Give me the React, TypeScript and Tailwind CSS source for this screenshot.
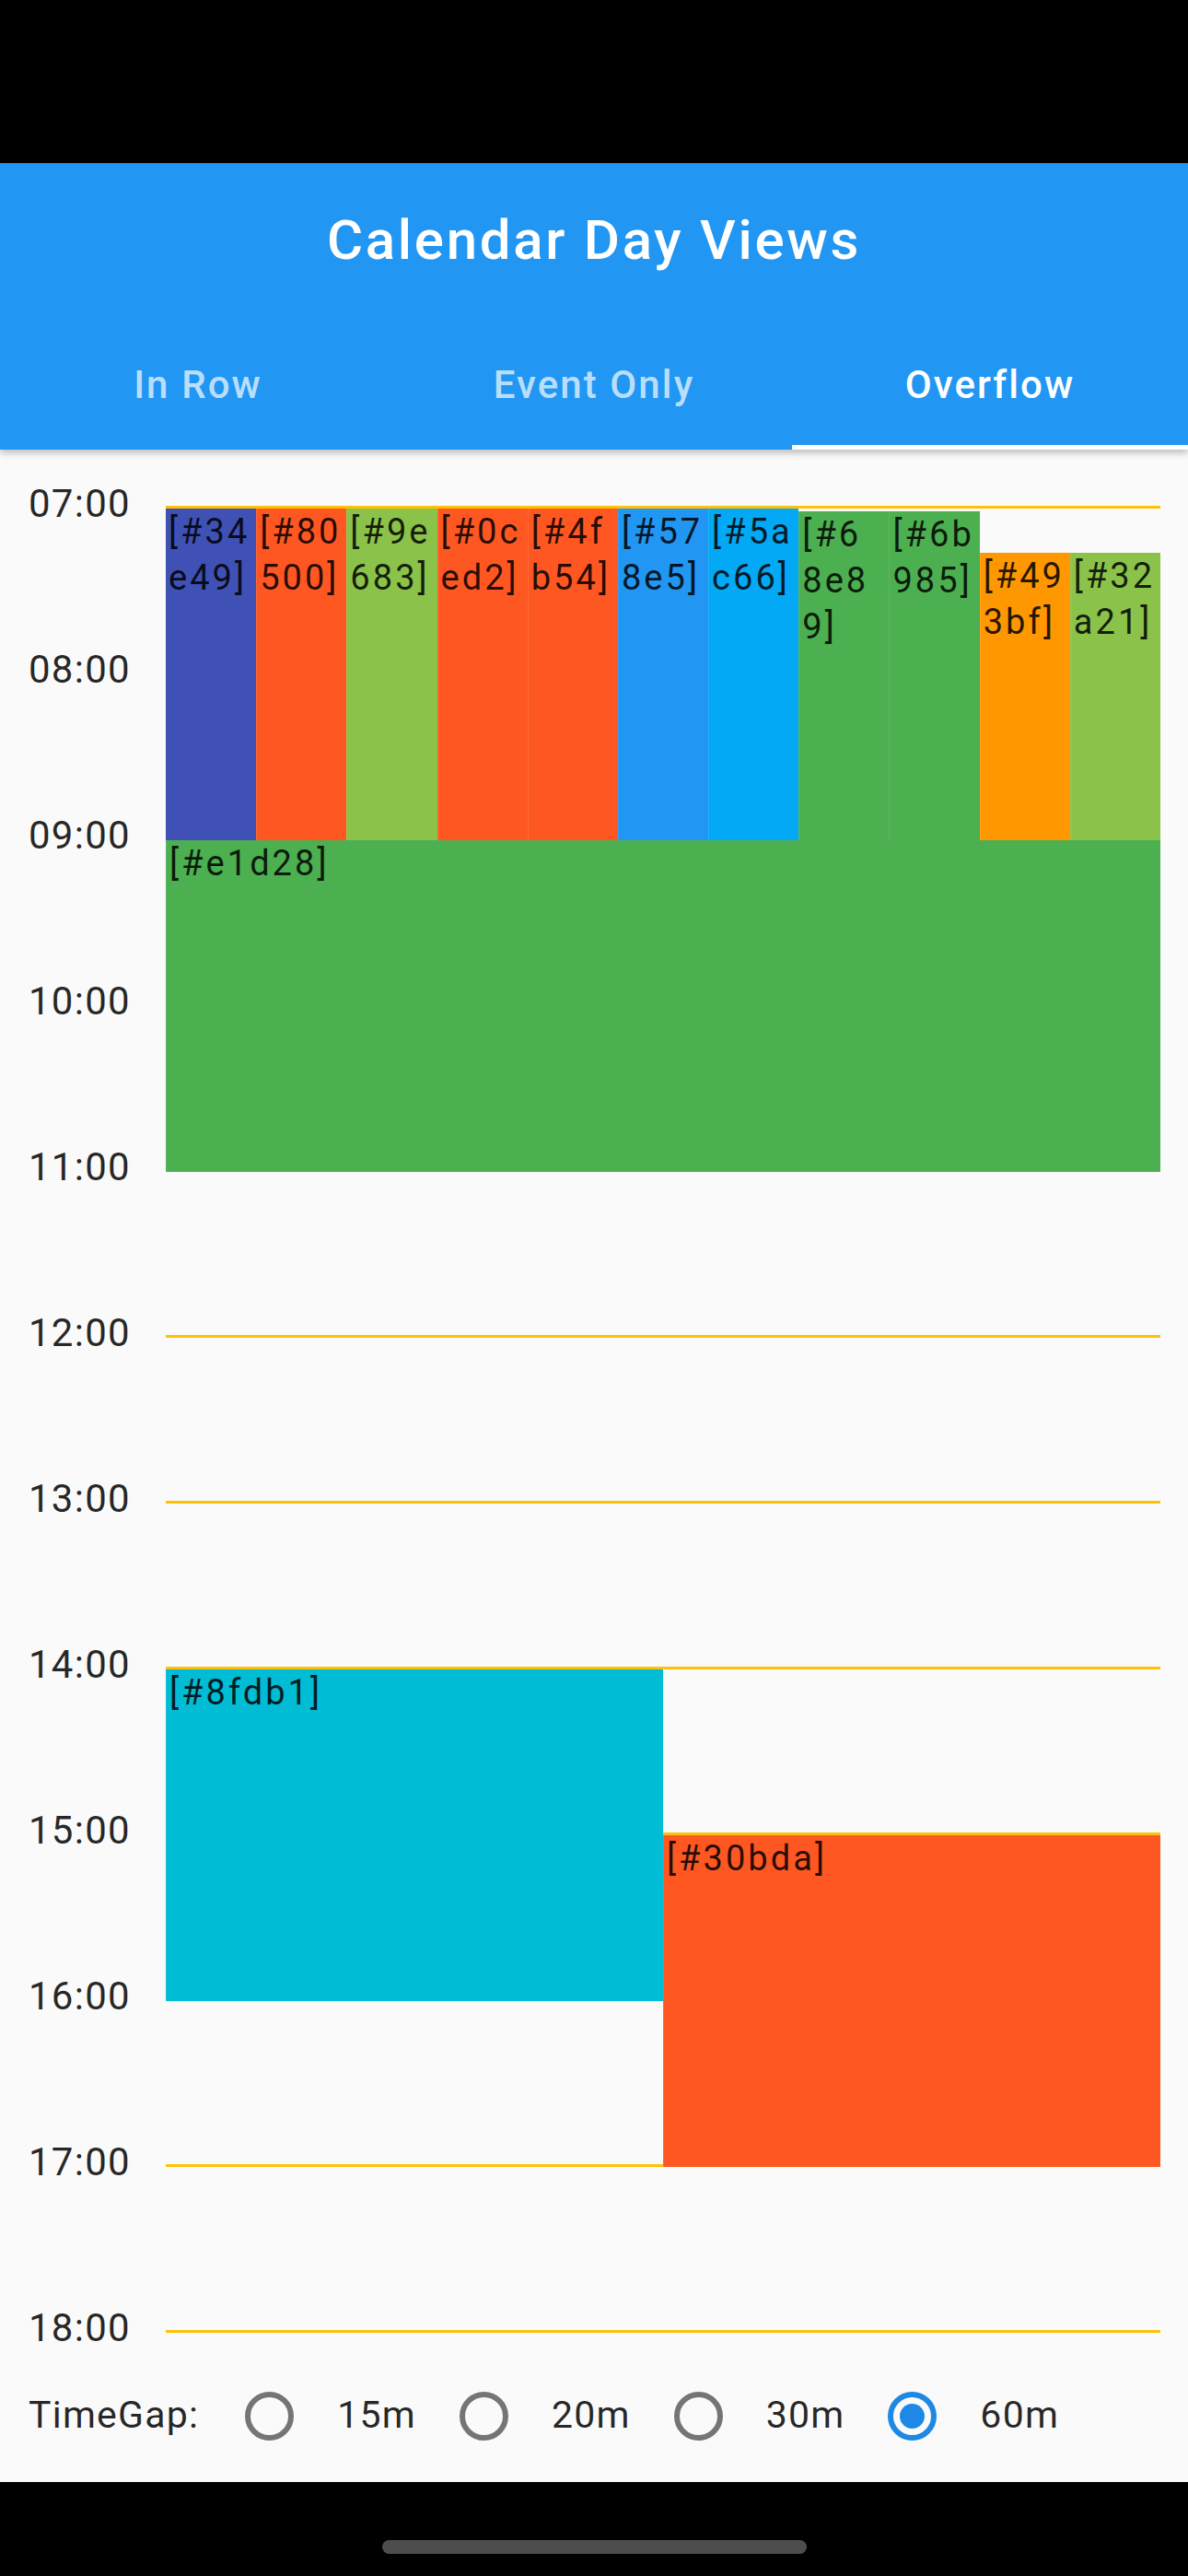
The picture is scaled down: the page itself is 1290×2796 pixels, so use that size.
import React from 'react';

type CalEvent = {
  id: string;
  lines: string[];
  color: string;
  start: number; // minutes after 07:00
  end: number;
  col: number;
  cols: number;
};

const HOUR_PX = 180;
const MIN_PX = HOUR_PX / 60;

const hours = ['07:00', '08:00', '09:00', '10:00', '11:00', '12:00', '13:00', '14:00', '15:00', '16:00', '17:00', '18:00'];

const events: CalEvent[] = [
  { id: '34e49', lines: ['[#34', 'e49]'], color: 'bg-[#3f51b5]', start: 0, end: 120, col: 0, cols: 11 },
  { id: '80500', lines: ['[#80', '500]'], color: 'bg-[#ff5722]', start: 0, end: 120, col: 1, cols: 11 },
  { id: '9e683', lines: ['[#9e', '683]'], color: 'bg-[#8bc34a]', start: 0, end: 120, col: 2, cols: 11 },
  { id: '0ced2', lines: ['[#0c', 'ed2]'], color: 'bg-[#ff5722]', start: 0, end: 120, col: 3, cols: 11 },
  { id: '4fb54', lines: ['[#4f', 'b54]'], color: 'bg-[#ff5722]', start: 0, end: 120, col: 4, cols: 11 },
  { id: '578e5', lines: ['[#57', '8e5]'], color: 'bg-[#2196f3]', start: 0, end: 120, col: 5, cols: 11 },
  { id: '5ac66', lines: ['[#5a', 'c66]'], color: 'bg-[#03a9f4]', start: 0, end: 120, col: 6, cols: 11 },
  { id: '68e89', lines: ['[#6', '8e8', '9]'], color: 'bg-[#4caf50]', start: 1, end: 120, col: 7, cols: 11 },
  { id: '6b985', lines: ['[#6b', '985]'], color: 'bg-[#4caf50]', start: 1, end: 120, col: 8, cols: 11 },
  { id: '493bf', lines: ['[#49', '3bf]'], color: 'bg-[#ff9800]', start: 16, end: 120, col: 9, cols: 11 },
  { id: '32a21', lines: ['[#32', 'a21]'], color: 'bg-[#8bc34a]', start: 16, end: 120, col: 10, cols: 11 },
  { id: 'e1d28', lines: ['[#e1d28]'], color: 'bg-[#4caf50]', start: 120, end: 240, col: 0, cols: 1 },
  { id: '8fdb1', lines: ['[#8fdb1]'], color: 'bg-[#00bcd4]', start: 420, end: 540, col: 0, cols: 2 },
  { id: '30bda', lines: ['[#30bda]'], color: 'bg-[#ff5722]', start: 480, end: 600, col: 1, cols: 2 },
];

const tabs = ['In Row', 'Event Only', 'Overflow'];
const gaps = ['15m', '20m', '30m', '60m'];

const Radio: React.FC<{ checked?: boolean }> = ({ checked }) => (
  <div
    className={`w-[53px] h-[53px] rounded-full border-[6px] flex items-center justify-center shrink-0 ${
      checked ? 'border-[#1e88e5]' : 'border-[#757575]'
    }`}
  >
    {checked && <div className="w-[27px] h-[27px] rounded-full bg-[#1e88e5]" />}
  </div>
);

export default function App() {
  return (
    <div className="w-[1290px] h-[2796px] flex flex-col bg-[#fafafa] overflow-hidden font-['Roboto','Liberation_Sans',sans-serif]">
      <div className="h-[177px] bg-black shrink-0" />

      <header className="h-[311px] shrink-0 bg-[#2196f3] relative z-10 flex flex-col shadow-[0_3px_8px_rgba(0,0,0,0.28)]">
        <div className="h-[168px] flex items-center justify-center">
          <h1 className="text-[60px] leading-none font-medium text-white tracking-[0.045em]">Calendar Day Views</h1>
        </div>
        <nav className="flex-1 flex">
          {tabs.map((t, i) => (
            <div key={t} className="flex-1 flex flex-col">
              <div
                className={`flex-1 flex items-center justify-center pt-[6px] text-[42px] font-medium tracking-[0.05em] ${
                  i === 2 ? 'text-white' : 'text-white/70'
                }`}
              >
                {t}
              </div>
              <div className={`h-[5px] ${i === 2 ? 'bg-white' : ''}`} />
            </div>
          ))}
        </nav>
      </header>

      <main className="flex-1 flex flex-col">
        <div className="h-[2062px] pt-[61px] overflow-hidden">
          <div className="relative">
            {hours.map((h, i) => (
              <div key={h} className={`flex ${i < hours.length - 1 ? 'h-[180px]' : 'h-[3px]'}`}>
                <div className="w-[180px] shrink-0 pl-[31px] -mt-[27px] h-[50px] text-[42px] leading-[50px] tracking-[0.03em] text-black/85">
                  {h}
                </div>
                <div className="flex-1 mr-[30px] border-t-[3px] border-[#ffc107]" />
              </div>
            ))}

            <div className="absolute top-0 left-[180px] w-[1080px] h-full">
              {events.map((e) => (
                <div
                  key={e.id}
                  className={`absolute overflow-hidden pl-[3px] text-[38px] leading-[50px] tracking-[0.08em] text-black/85 border-l border-white/10 first:border-l-0 ${e.color}`}
                  style={{
                    top: 3 + e.start * MIN_PX,
                    height: (e.end - e.start) * MIN_PX,
                    left: `${(e.col / e.cols) * 100}%`,
                    width: `${100 / e.cols}%`,
                  }}
                >
                  {e.lines.map((l) => (
                    <div key={l} className="whitespace-nowrap">
                      {l}
                    </div>
                  ))}
                </div>
              ))}
            </div>
          </div>
        </div>

        <div className="h-[144px] flex items-center pl-[31px] gap-[47px] text-[41px] tracking-[0.03em] text-black/85">
          <span className="mr-[3px]">TimeGap:</span>
          {gaps.map((g, i) => (
            <React.Fragment key={g}>
              <Radio checked={i === 3} />
              <span>{g}</span>
            </React.Fragment>
          ))}
        </div>
      </main>

      <div className="h-[102px] shrink-0 bg-black flex justify-center pt-[63px]">
        <div className="w-[461px] h-[15px] rounded-full bg-[#4d4d4d]" />
      </div>
    </div>
  );
}
